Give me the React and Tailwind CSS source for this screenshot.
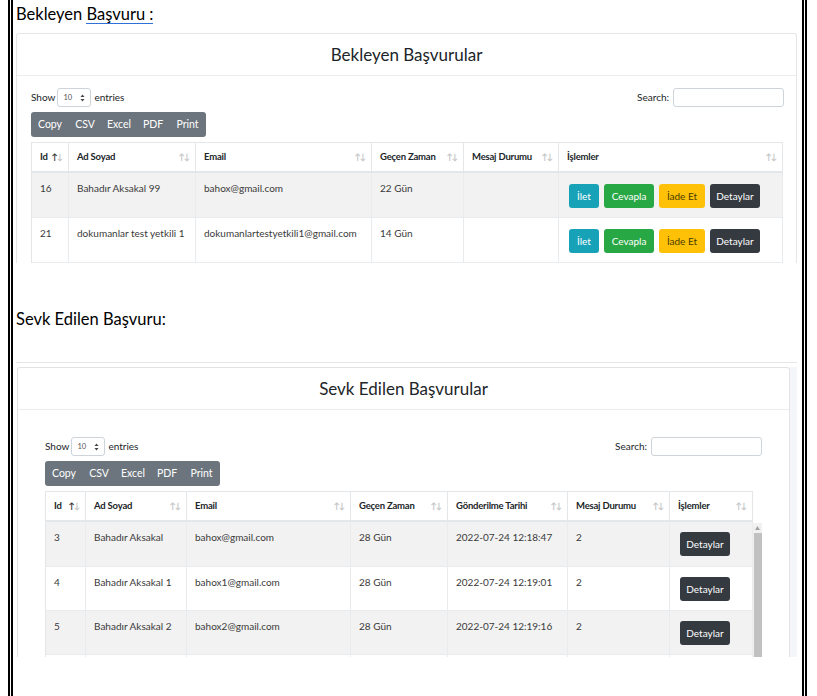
import React from 'react';

const PENDING = [
  { id: '16', name: 'Bahadır Aksakal 99', email: 'bahox@gmail.com', time: '22 Gün', status: '' },
  { id: '21', name: 'dokumanlar test yetkili 1', email: 'dokumanlartestyetkili1@gmail.com', time: '14 Gün', status: '' },
];

const SENT = [
  { id: '3', name: 'Bahadır Aksakal', email: 'bahox@gmail.com', time: '28 Gün', date: '2022-07-24 12:18:47', status: '2' },
  { id: '4', name: 'Bahadır Aksakal 1', email: 'bahox1@gmail.com', time: '28 Gün', date: '2022-07-24 12:19:01', status: '2' },
  { id: '5', name: 'Bahadır Aksakal 2', email: 'bahox2@gmail.com', time: '28 Gün', date: '2022-07-24 12:19:16', status: '2' },
  { id: '', name: '', email: '', time: '', date: '', status: '' },
];

function SortIcon({ active }) {
  return (
    <span className="flex w-[9px] shrink-0 justify-end text-[8.5px] leading-none tracking-[-1px]">
      <span className={active ? 'text-[#333]' : 'text-[#c4c4c4]'}>↑</span>
      <span className="text-[#c4c4c4]">↓</span>
    </span>
  );
}

function SelectBox() {
  return (
    <div className="w-[34px] h-[19px] border border-[#ced4da] rounded-[3px] flex items-center justify-between px-[5px] text-[7.5px] text-[#555]">
      <span>10</span>
      <svg width="5" height="8" viewBox="0 0 5 8">
        <path d="M2.5 0.5 L4.5 3 L0.5 3 Z" fill="#444" />
        <path d="M2.5 7.5 L4.5 5 L0.5 5 Z" fill="#444" />
      </svg>
    </div>
  );
}

function Toolbar() {
  return (
    <>
      <div className="flex items-start justify-between">
        <div className="flex items-center gap-[3px] text-[10px] text-[#212529]">
          <span className="mr-[-1px]">Show</span>
          <SelectBox />
          <span>entries</span>
        </div>
        <div className="flex items-center gap-[4px] text-[10px] text-[#212529]">
          <span>Search:</span>
          <div className="w-[111px] h-[19px] border border-[#ced4da] rounded-[3px]" />
        </div>
      </div>
      <div className="mt-[5px] flex w-fit h-[25px] bg-[#6c757d] rounded-[3px] text-white text-[10.5px]">
        <span className="w-[38px] flex items-center justify-center">Copy</span>
        <span className="w-[32px] flex items-center justify-center">CSV</span>
        <span className="w-[36px] flex items-center justify-center">Excel</span>
        <span className="w-[32px] flex items-center justify-center">PDF</span>
        <span className="w-[37px] flex items-center justify-center">Print</span>
      </div>
    </>
  );
}

function Th({ children, active }) {
  return (
    <div className="h-[30px] flex items-center justify-between pl-[8px] pr-[6px] border-r border-b-2 border-[#e4e7ea] font-bold text-[9.5px] tracking-[-0.2px] text-[#212529] whitespace-nowrap">
      <span>{children}</span>
      <SortIcon active={active} />
    </div>
  );
}

function Td({ children, h }) {
  return (
    <div className={`${h} pl-[8px] pt-[7px] border-r border-b border-[#e9ecef] text-[10px] leading-[16px] text-[#3a3a3a] whitespace-nowrap`}>
      {children}
    </div>
  );
}

function Btn({ children, className }) {
  return (
    <div className={`h-[24px] rounded-[3px] flex items-center justify-center text-[10px] ${className}`}>
      {children}
    </div>
  );
}

function PendingCard() {
  return (
    <div className="w-[781px] h-[230px] overflow-hidden border border-b-0 border-[#e6e6e6] rounded-t-[3px] bg-white">
      <div className="h-[42px] border-b border-[#ececec] flex items-center justify-center text-[17px] text-[#212529]">
        Bekleyen Başvurular
      </div>
      <div className="pl-[14px] pr-[12px] pt-[12px]">
        <Toolbar />
        <div className="mt-[5px] w-[752px] border-l border-t border-[#e4e7ea] grid grid-cols-[37px_127px_176px_92px_95px_224px]">
          <Th active>Id</Th>
          <Th>Ad Soyad</Th>
          <Th>Email</Th>
          <Th>Geçen Zaman</Th>
          <Th>Mesaj Durumu</Th>
          <Th>İşlemler</Th>
          {PENDING.map((r, i) => {
            const bg = i % 2 === 0 ? 'bg-[#f2f2f2]' : 'bg-white';
            return (
              <React.Fragment key={r.id}>
                <Td h={`h-[45px] ${bg}`}>{r.id}</Td>
                <Td h={`h-[45px] ${bg}`}>{r.name}</Td>
                <Td h={`h-[45px] ${bg}`}>{r.email}</Td>
                <Td h={`h-[45px] ${bg}`}>{r.time}</Td>
                <Td h={`h-[45px] ${bg}`}>{r.status}</Td>
                <div className={`h-[45px] ${bg} border-r border-b border-[#e9ecef] flex gap-[5px] pl-[10px] pt-[11px]`}>
                  <Btn className="w-[30px] bg-[#17a2b8] text-white">İlet</Btn>
                  <Btn className="w-[50px] bg-[#28a745] text-white">Cevapla</Btn>
                  <Btn className="w-[46px] bg-[#ffc107] text-[#4a3b00]">İade Et</Btn>
                  <Btn className="w-[50px] bg-[#343a40] text-white">Detaylar</Btn>
                </div>
              </React.Fragment>
            );
          })}
        </div>
      </div>
    </div>
  );
}

function SentCard() {
  const heights = ['h-[45px]', 'h-[44px]', 'h-[44px]', 'h-[44px]'];
  return (
    <div className="w-[781px] border-t border-[#e6e6e6]">
      <div className="h-[4px]" />
      <div className="flex h-[290px]">
        <div className="ml-[1px] w-[773px] overflow-hidden border border-b-0 border-[#e3e3e3] rounded-t-[3px] bg-white">
          <div className="h-[42px] border-b border-[#ececec] flex items-center justify-center text-[17px] text-[#212529]">
            Sevk Edilen Başvurular
          </div>
          <div className="px-[27px] pt-[27px]">
            <Toolbar />
            <div className="mt-[5px] w-[708px] border-l border-t border-[#e4e7ea] grid grid-cols-[40px_101px_164px_97px_120px_102px_83px]">
              <Th active>Id</Th>
              <Th>Ad Soyad</Th>
              <Th>Email</Th>
              <Th>Geçen Zaman</Th>
              <Th>Gönderilme Tarihi</Th>
              <Th>Mesaj Durumu</Th>
              <Th>İşlemler</Th>
            </div>
            <div className="flex">
              <div className="w-[708px] border-l border-[#e4e7ea] grid grid-cols-[40px_101px_164px_97px_120px_102px_83px]">
                {SENT.map((r, i) => {
                  const cls = `${heights[i]} ${i % 2 === 0 ? 'bg-[#f2f2f2]' : 'bg-white'}`;
                  return (
                    <React.Fragment key={i}>
                      <Td h={cls}>{r.id}</Td>
                      <Td h={cls}>{r.name}</Td>
                      <Td h={cls}>{r.email}</Td>
                      <Td h={cls}>{r.time}</Td>
                      <Td h={cls}>{r.date}</Td>
                      <Td h={cls}>{r.status}</Td>
                      <div className={`${cls} border-r border-b border-[#e9ecef] pl-[10px] pt-[10px]`}>
                        {r.id && <Btn className="w-[50px] bg-[#343a40] text-white">Detaylar</Btn>}
                      </div>
                    </React.Fragment>
                  );
                })}
              </div>
              {/* scrollbar */}
              <div className="w-[9px] mt-[1px] bg-[#f1f1f1] flex flex-col items-center">
                <svg className="mt-[3px]" width="5" height="4" viewBox="0 0 5 4">
                  <path d="M2.5 0 L5 4 L0 4 Z" fill="#a3a3a3" />
                </svg>
                <div className="mt-[3px] w-[8px] flex-1 bg-[#c1c1c1]" />
              </div>
            </div>
          </div>
        </div>
        <div className="flex-1 bg-[#f4f6f9]" />
      </div>
    </div>
  );
}

export default function App() {
  return (
    <div className="w-[817px] h-[696px] bg-white overflow-hidden font-[Lato,sans-serif]">
      <div className="ml-[8px] w-[799px] h-full border-x-[5px] border-double border-black pl-[3px]">
        <div className="pt-[4px] h-[24px] flex items-baseline text-[16.5px] leading-[20px] text-black">
          <span>Bekleyen&nbsp;</span>
          <span className="inline-block leading-[18px] border-b-[1.5px] border-[#2f6fd8]">Başvuru :</span>
        </div>
        <div className="mt-[9px]">
          <PendingCard />
        </div>
        <div className="mt-[46px] h-[20px] text-[16.5px] leading-[20px] text-black">Sevk Edilen Başvuru:</div>
        <div className="mt-[33px]">
          <SentCard />
        </div>
      </div>
    </div>
  );
}
